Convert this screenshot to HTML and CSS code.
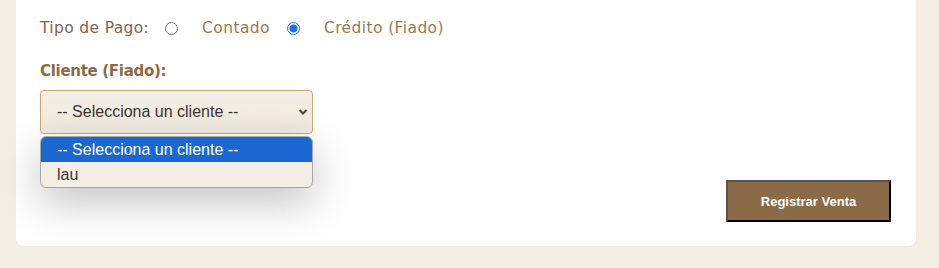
FILE: index.html
```html
<!DOCTYPE html>
<html lang="es">
<head>
<meta charset="utf-8">
<title>Venta</title>
<link rel="stylesheet" href="styles.css">
</head>
<body>
<div class="page">
  <div class="card">
    <div class="pay-row">
      <span class="pay-label">Tipo de Pago:</span>
      <label class="radio-opt"><span class="radio"></span><span class="radio-text">Contado</span></label>
      <label class="radio-opt"><span class="radio checked"></span><span class="radio-text">Crédito (Fiado)</span></label>
    </div>
    <div class="field-label">Cliente (Fiado):</div>
    <div class="select-wrap">
      <div class="select">-- Selecciona un cliente --</div>
      <svg class="chev" width="10" height="8" viewBox="0 0 10 8"><path d="M1.5 2 L5 5.5 L8.5 2" fill="none" stroke="#5a4530" stroke-width="2.2"/></svg>
      <div class="dropdown">
        <div class="opt active">-- Selecciona un cliente --</div>
        <div class="opt">lau</div>
      </div>
    </div>
    <div class="hidden-row">
      <span class="total-label">(</span>
    </div>
    <div class="actions">
      <button class="btn">Registrar Venta</button>
    </div>
  </div>
</div>
</body>
</html>
```

FILE: styles.css
```css
html, body {
  margin: 0;
  padding: 0;
  background: #f3eee4;
}
.page {
  padding: 0 23px 22px 16px;
}
.card {
  background: #ffffff;
  border-radius: 0 0 8px 8px;
  padding: 16px 25px 24px 24px;
  height: 246px;
  box-sizing: border-box;
  font-family: "DejaVu Sans", sans-serif;
}
.pay-row {
  display: flex;
  align-items: center;
  height: 24px;
  font-size: 15.5px;
  color: #7d6550;
}
.pay-label {
  margin-right: 16px;
  letter-spacing: 0.35px;
}
.radio-opt {
  display: flex;
  align-items: center;
  margin-right: 17px;
  color: #9a7a52;
  letter-spacing: 0.4px;
}
.radio {
  width: 11px;
  height: 11px;
  border: 1px solid #767676;
  border-radius: 50%;
  margin-right: 24px;
  box-sizing: content-box;
}
.radio.checked {
  border: 1px solid #1a73e8;
  background: radial-gradient(circle, #1a73e8 0 3.5px, #ffffff 4.5px);
}
.field-label {
  margin-top: 21px;
  font-size: 15px;
  font-weight: bold;
  color: #8b6b47;
  height: 20px;
  line-height: 20px;
  letter-spacing: -0.3px;
}
.select-wrap {
  position: relative;
  width: 273px;
  margin-top: 9px;
}
.select {
  height: 44px;
  box-sizing: border-box;
  border: 1px solid #d9a36f;
  border-radius: 4px;
  background: linear-gradient(#f5f0e7, #efe9de);
  font-family: "Liberation Sans", Arial, sans-serif;
  font-size: 16px;
  color: #3b3430;
  padding-left: 16px;
  line-height: 42px;
}
.chev {
  position: absolute;
  right: 5px;
  top: 18px;
}
.dropdown {
  position: absolute;
  left: 0;
  top: 46px;
  width: 273px;
  box-sizing: border-box;
  border: 1px solid #a8a8a8;
  border-radius: 6px;
  background: #f4efe5;
  overflow: hidden;
  box-shadow: 0 14px 40px rgba(0, 0, 0, 0.24);
  z-index: 5;
  font-family: "Liberation Sans", Arial, sans-serif;
  font-size: 16px;
  color: #3b3430;
}
.opt {
  height: 25px;
  line-height: 25px;
  padding-left: 16px;
}
.opt.active {
  background: #1a67d2;
  color: #ffffff;
}
.hidden-row {
  height: 20px;
  margin-top: 14px;
  font-size: 15px;
  color: #6b4f33;
}
.actions {
  display: flex;
  justify-content: flex-end;
  margin-top: 12px;
}
.btn {
  width: 165px;
  height: 42px;
  background: #8b6b47;
  color: #ffffff;
  border-style: solid;
  border-width: 2px;
  border-color: #555555 #000000 #000000 #555555;
  font-family: "Liberation Sans", Arial, sans-serif;
  font-weight: bold;
  font-size: 13px;
  padding: 0;
}
```
